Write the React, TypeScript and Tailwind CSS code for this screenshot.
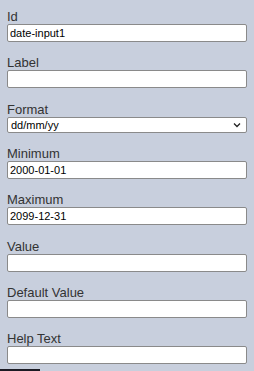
import React from "react";

const fields: { label: string; value?: string; select?: boolean }[] = [
  { label: "Id", value: "date-input1" },
  { label: "Label", value: "" },
  { label: "Format", value: "dd/mm/yy", select: true },
  { label: "Minimum", value: "2000-01-01" },
  { label: "Maximum", value: "2099-12-31" },
  { label: "Value", value: "" },
  { label: "Default Value", value: "" },
  { label: "Help Text", value: "" },
];

export default function App() {
  return (
    <div
      className="w-[254px] h-[371px] overflow-hidden bg-[#c8cfdd] flex flex-col"
      style={{ fontFamily: '"Liberation Sans", Arial, sans-serif' }}
    >
      <div className="flex flex-col px-[7px] pt-[9px]">
        {fields.map((f, i) => (
          <div key={f.label} className={i === 0 ? "flex flex-col" : "flex flex-col mt-[13.33px]"}>
            <label className="text-[13px] leading-[15px] text-[#333333]">{f.label}</label>
            {f.select ? (
              <div className="relative h-[16px] w-[240px] bg-white border border-[#8a8a8a] rounded-[2px] flex items-center">
                <span className="text-[11px] leading-[14px] text-black pl-[3px]">{f.value}</span>
                <svg
                  className="absolute right-[5px] top-[4px]"
                  width="8"
                  height="6"
                  viewBox="0 0 8 6"
                  fill="none"
                >
                  <path d="M1 1.5 L4 4.5 L7 1.5" stroke="#222" strokeWidth="1.3" />
                </svg>
              </div>
            ) : (
              <input
                readOnly
                value={f.value}
                className="h-[18px] w-[240px] bg-white border border-[#8a8a8a] rounded-[2px] px-[2px] text-[11px] text-black outline-none"
              />
            )}
          </div>
        ))}
      </div>
      <div className="mt-auto w-[40px] h-[2px] bg-[#1b1b24]" />
    </div>
  );
}
